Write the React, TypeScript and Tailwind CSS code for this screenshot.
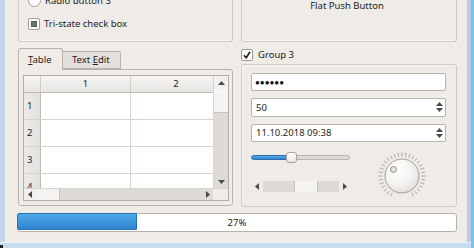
import React from "react";

const Up = ({ c = "#4a4a4a" }: { c?: string }) => (
  <svg width="7" height="4" viewBox="0 0 7 4"><path d="M0 4 L3.5 0 L7 4 Z" fill={c} /></svg>
);
const Down = ({ c = "#4a4a4a" }: { c?: string }) => (
  <svg width="7" height="4" viewBox="0 0 7 4"><path d="M0 0 L3.5 4 L7 0 Z" fill={c} /></svg>
);
const Left = ({ c = "#4a4a4a" }: { c?: string }) => (
  <svg width="4" height="7" viewBox="0 0 4 7"><path d="M4 0 L0 3.5 L4 7 Z" fill={c} /></svg>
);
const Right = ({ c = "#4a4a4a" }: { c?: string }) => (
  <svg width="4" height="7" viewBox="0 0 4 7"><path d="M0 0 L4 3.5 L0 7 Z" fill={c} /></svg>
);

function Dial() {
  const ticks = [];
  for (let i = 0; i <= 30; i++) {
    const a = ((-150 + i * 10) * Math.PI) / 180;
    const x1 = 30 + Math.sin(a) * 19.5;
    const y1 = 30 - Math.cos(a) * 19.5;
    const x2 = 30 + Math.sin(a) * 23.5;
    const y2 = 30 - Math.cos(a) * 23.5;
    ticks.push(<line key={i} x1={x1} y1={y1} x2={x2} y2={y2} stroke="#a9a6a3" strokeWidth="1" />);
  }
  return (
    <svg width="60" height="60" viewBox="0 0 60 60">
      <defs>
        <radialGradient id="kg" cx="0.4" cy="0.35" r="0.75">
          <stop offset="0" stopColor="#ffffff" />
          <stop offset="0.6" stopColor="#f3f1ef" />
          <stop offset="1" stopColor="#d9d5d1" />
        </radialGradient>
      </defs>
      {ticks}
      <circle cx="30" cy="30" r="17" fill="url(#kg)" stroke="#a19d99" strokeWidth="1" />
      <circle cx="21.5" cy="23.5" r="3" fill="#e6e3e0" stroke="#8f8b88" strokeWidth="1" />
    </svg>
  );
}

export default function App() {
  return (
    <div className="w-[474px] h-[248px] overflow-hidden flex flex-col font-['Noto_Sans',sans-serif] text-[9.5px] text-[#232323] leading-none">
      <div className="flex h-[242px]">
        <div className="w-[5px] bg-[#c6d4ec]" />
        <div className="w-[462px] bg-[#efebe7] flex flex-col pl-[12px]">
          {/* top row */}
          <div className="flex h-[42px] gap-[8px]">
            <div className="ml-[1px] w-[215px] h-[42px] border-x border-b border-[#cfcbc7] rounded-b-[3px] shadow-[inset_0_-1px_0_#f8f6f4] flex flex-col pl-[9px] overflow-hidden">
              <div className="flex items-center h-[13px] mt-[-6px] gap-[4px]">
                <div className="w-[13px] h-[13px] rounded-full border border-[#a09c98] bg-white" />
                <span>Radio button 3</span>
              </div>
              <div className="flex items-center h-[13px] mt-[10px] gap-[4px]">
                <div className="w-[12px] h-[12px] rounded-[2px] border border-[#a09c98] bg-white flex items-center justify-center">
                  <div className="w-[6px] h-[6px] bg-[#777370] border border-[#5e5a57]" />
                </div>
                <span>Tri-state check box</span>
              </div>
            </div>
            <div className="w-[216px] h-[42px] border-x border-b border-[#cfcbc7] rounded-b-[3px] shadow-[inset_0_-1px_0_#f8f6f4] flex flex-col items-center">
              <div className="h-[12px] flex items-center pr-[4px]">Flat Push Button</div>
            </div>
          </div>
          {/* middle row */}
          <div className="flex gap-[8px] mt-[6px] h-[159px]">
            {/* tab widget */}
            <div className="ml-[1px] w-[215px] flex flex-col">
              <div className="flex h-[21px] items-end">
                <div className="w-[45px] h-[22px] border border-b-0 border-[#b7b2ad] rounded-t-[3px] bg-[#efebe7] flex items-center pl-[9px] relative z-10 mb-[-1px]">
                  <span><span className="underline">T</span>able</span>
                </div>
                <div className="w-[58px] h-[18px] border border-l-0 border-[#b7b2ad] rounded-tr-[3px] bg-[#e3dfdb] flex items-center pl-[9px]">
                  <span>Text <span className="underline">E</span>dit</span>
                </div>
              </div>
              <div className="h-[137px] border border-[#b7b2ad] rounded-b-[3px] rounded-tr-[3px] pl-[4px] pt-[5px]">
                {/* table */}
                <div className="w-[206px] h-[126px] border border-[#b3aeaa] bg-white flex flex-col">
                  <div className="flex h-[112px]">
                    <div className="w-[189px] flex flex-col overflow-hidden">
                      <div className="flex h-[17px] shrink-0 border-b border-[#bdb9b5] bg-gradient-to-b from-[#f5f4f2] to-[#e7e4e1]">
                        <div className="w-[17px] shrink-0 border-r border-[#cfcbc7]" />
                        <div className="w-[90px] shrink-0 border-r border-[#cfcbc7] flex items-center justify-center">1</div>
                        <div className="w-[90px] shrink-0 flex items-center justify-center">2</div>
                      </div>
                      {["1", "2", "3", "4"].map((r) => (
                        <div key={r} className="flex h-[27px] shrink-0 border-b border-[#d6d3d0]">
                          <div className="w-[17px] shrink-0 border-r border-[#bdb9b5] bg-gradient-to-r from-[#eceae7] to-[#e3e0dd] flex items-center pl-[3px]">{r}</div>
                          <div className="w-[90px] shrink-0 border-r border-[#d6d3d0]" />
                          <div className="w-[90px] shrink-0" />
                        </div>
                      ))}
                    </div>
                    <div className="w-[15px] flex flex-col border-l border-[#d6d3d0] bg-[#dedbd7]">
                      <div className="h-[13px] flex items-center justify-center bg-[#f2f0ee]"><Up /></div>
                      <div className="h-[24px] bg-[#f6f5f3] border-b border-[#c8c4c0]" />
                      <div className="flex-1" />
                      <div className="h-[12px] flex items-center justify-center"><Down /></div>
                    </div>
                  </div>
                  <div className="flex h-[12px] border-t border-[#d6d3d0]">
                    <div className="w-[189px] flex bg-[#dedbd7]">
                      <div className="w-[12px] flex items-center justify-center bg-[#f2f0ee]"><Left /></div>
                      <div className="w-[24px] bg-[#f4f3f1] border-r border-[#c8c4c0]" />
                      <div className="flex-1" />
                      <div className="w-[11px] flex items-center justify-center"><Right /></div>
                    </div>
                    <div className="w-[15px] bg-[#efebe7]" />
                  </div>
                </div>
              </div>
            </div>
            {/* group 3 */}
            <div className="w-[216px] flex flex-col">
              <div className="flex items-center h-[13px] mt-[1px] gap-[5px]">
                <div className="w-[12px] h-[12px] border border-[#9d9995] rounded-[2px] bg-white flex items-center justify-center">
                  <svg width="8" height="8" viewBox="0 0 8 8"><path d="M1 4.2 L3.2 6.8 L7 0.8" stroke="#1e1e1e" strokeWidth="1.6" fill="none" /></svg>
                </div>
                <span>Group 3</span>
              </div>
              <div className="mt-[3px] h-[143px] border border-[#cfcbc7] rounded-[3px] shadow-[inset_1px_1px_0_#f8f6f4] flex flex-col pl-[9px] pr-[10px] pt-[8px]">
                <div className="h-[19px] border border-[#b7b2ad] rounded-[2px] bg-white flex items-center pl-[3px] text-[8px] text-[#111]">●●●●●●</div>
                <div className="mt-[7px] h-[19px] border border-[#b7b2ad] rounded-[2px] bg-white flex items-center pl-[4px]">
                  <span className="flex-1">50</span>
                  <div className="w-[12px] flex flex-col items-center gap-[2px]"><Up /><Down /></div>
                </div>
                <div className="mt-[7px] h-[19px] border border-[#b7b2ad] rounded-[2px] bg-white flex items-center pl-[4px]">
                  <span className="flex-1">11.10.2018 09:38</span>
                  <div className="w-[12px] flex flex-col items-center gap-[2px]"><Up /><Down /></div>
                </div>
                <div className="flex mt-[3px]">
                  <div className="w-[99px] flex flex-col">
                    <div className="h-[26px] flex items-center">
                      <div className="w-[36px] h-[5px] rounded-l-[3px] bg-gradient-to-b from-[#5aa8e6] to-[#2f83cf] border border-[#2c6fae]" />
                      <div className="w-[11px] h-[11px] rounded-[3px] border border-[#a8a4a0] bg-gradient-to-b from-white to-[#e9e6e3] mx-[-1px] relative z-10" />
                      <div className="flex-1 h-[5px] rounded-r-[3px] bg-[#dcd8d4] border border-[#b9b5b1]" />
                    </div>
                    <div className="mt-[10px] h-[11px] flex bg-[#dcd9d5]">
                      <div className="w-[12px] flex items-center justify-center bg-[#efebe7]"><Left /></div>
                      <div className="w-[31px]" />
                      <div className="w-[24px] bg-[#f5f3f1] border-x border-[#c8c4c0]" />
                      <div className="flex-1" />
                      <div className="w-[11px] flex items-center justify-center bg-[#efebe7]"><Right /></div>
                    </div>
                  </div>
                  <div className="ml-[22px] mt-[1px]">
                    <Dial />
                  </div>
                </div>
              </div>
            </div>
          </div>
          {/* progress */}
          <div className="mt-[6px] w-[440px] h-[19px] border border-[#b7b2ad] rounded-[3px] bg-white flex relative">
            <div className="w-[120px] h-[17px] rounded-l-[2px] bg-gradient-to-b from-[#4ea8e8] to-[#2e84cf] border border-[#2a72b8] -m-[1px]" />
            <div className="absolute inset-0 flex items-center justify-center">27%</div>
          </div>
        </div>
        <div className="w-[4px] bg-[#bccbe8]" />
        <div className="w-[3px] bg-[#74c4f0]" />
      </div>
      <div className="flex h-[6px]">
        <div className="w-[471px] bg-[#c9dcee] border-t border-[#eef3f8] flex items-end">
          <div className="w-[3px] h-[3px] bg-[#222]" />
        </div>
        <div className="w-[3px] bg-[#74c4f0]" />
      </div>
    </div>
  );
}
